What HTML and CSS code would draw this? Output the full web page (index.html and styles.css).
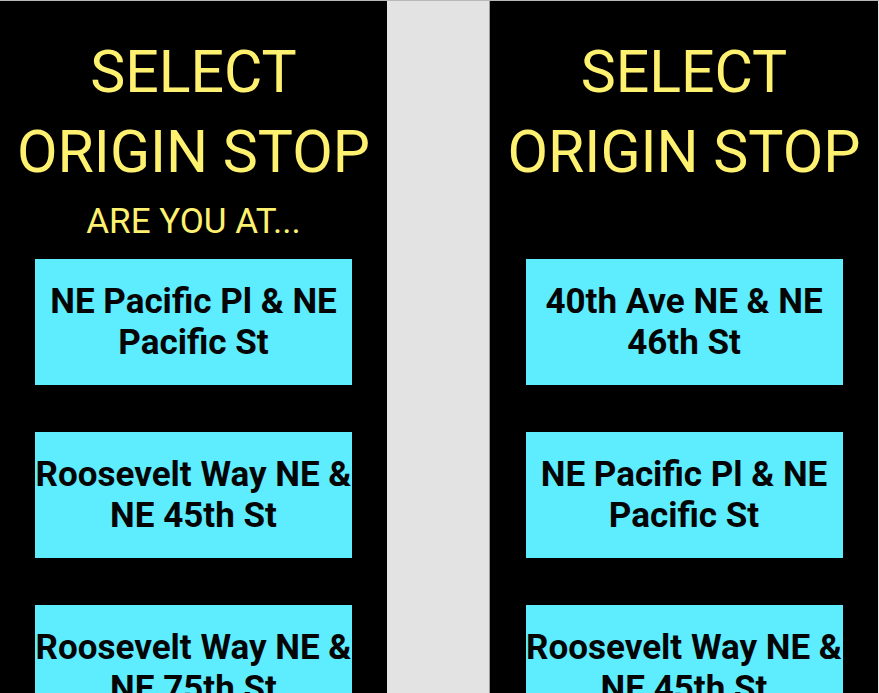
FILE: index.html
```html
<!DOCTYPE html>
<html>
<head>
<meta charset="utf-8">
<link rel="stylesheet" href="styles.css">
</head>
<body>
<div class="screen">
  <section class="panel panel-left">
    <h1 class="title">SELECT<br>ORIGIN STOP</h1>
    <div class="subtitle">ARE YOU AT...</div>
    <div class="stops">
      <button class="stop">NE Pacific Pl &amp; NE Pacific St</button>
      <button class="stop">Roosevelt Way NE &amp; NE 45th St</button>
      <button class="stop">Roosevelt Way NE &amp; NE 75th St</button>
    </div>
  </section>
  <section class="panel panel-right">
    <h1 class="title">SELECT<br>ORIGIN STOP</h1>
    <div class="subtitle"></div>
    <div class="stops">
      <button class="stop">40th Ave NE &amp; NE 46th St</button>
      <button class="stop">NE Pacific Pl &amp; NE Pacific St</button>
      <button class="stop">Roosevelt Way NE &amp; NE 45th St</button>
    </div>
  </section>
</div>
</body>
</html>
```
FILE: styles.css
```css
html, body {
  margin: 0;
  padding: 0;
  height: 100%;
  overflow: hidden;
  background: #e3e3e3;
}
body {
  border-top: 1px solid #b8b8b8;
  box-sizing: border-box;
}
.screen {
  display: flex;
  gap: 102px;
  font-family: Roboto, "Liberation Sans", sans-serif;
}
.panel {
  background: #000;
  height: 900px;
  display: flex;
  flex-direction: column;
  align-items: center;
  padding-top: 31px;
  box-sizing: border-box;
}
.panel-left {
  width: 387px;
}
.panel-right {
  width: 389px;
  border-left: 1px solid #9a9a9a;
}
.title {
  margin: 0;
  color: #fff170;
  font-weight: 400;
  font-size: 59px;
  line-height: 80px;
  text-align: center;
  white-space: nowrap;
}
.subtitle {
  margin-top: 10px;
  height: 40px;
  color: #fff170;
  font-size: 35px;
  line-height: 40px;
  text-align: center;
}
.stops {
  margin-top: 17px;
  display: flex;
  flex-direction: column;
  gap: 47px;
}
.stop {
  width: 317px;
  height: 126px;
  border: 0;
  padding: 0;
  margin: 0;
  background: #5eecff;
  color: #050505;
  font-family: Roboto, "Liberation Sans", sans-serif;
  font-weight: 700;
  font-size: 35px;
  line-height: 41px;
  text-align: center;
}
```
